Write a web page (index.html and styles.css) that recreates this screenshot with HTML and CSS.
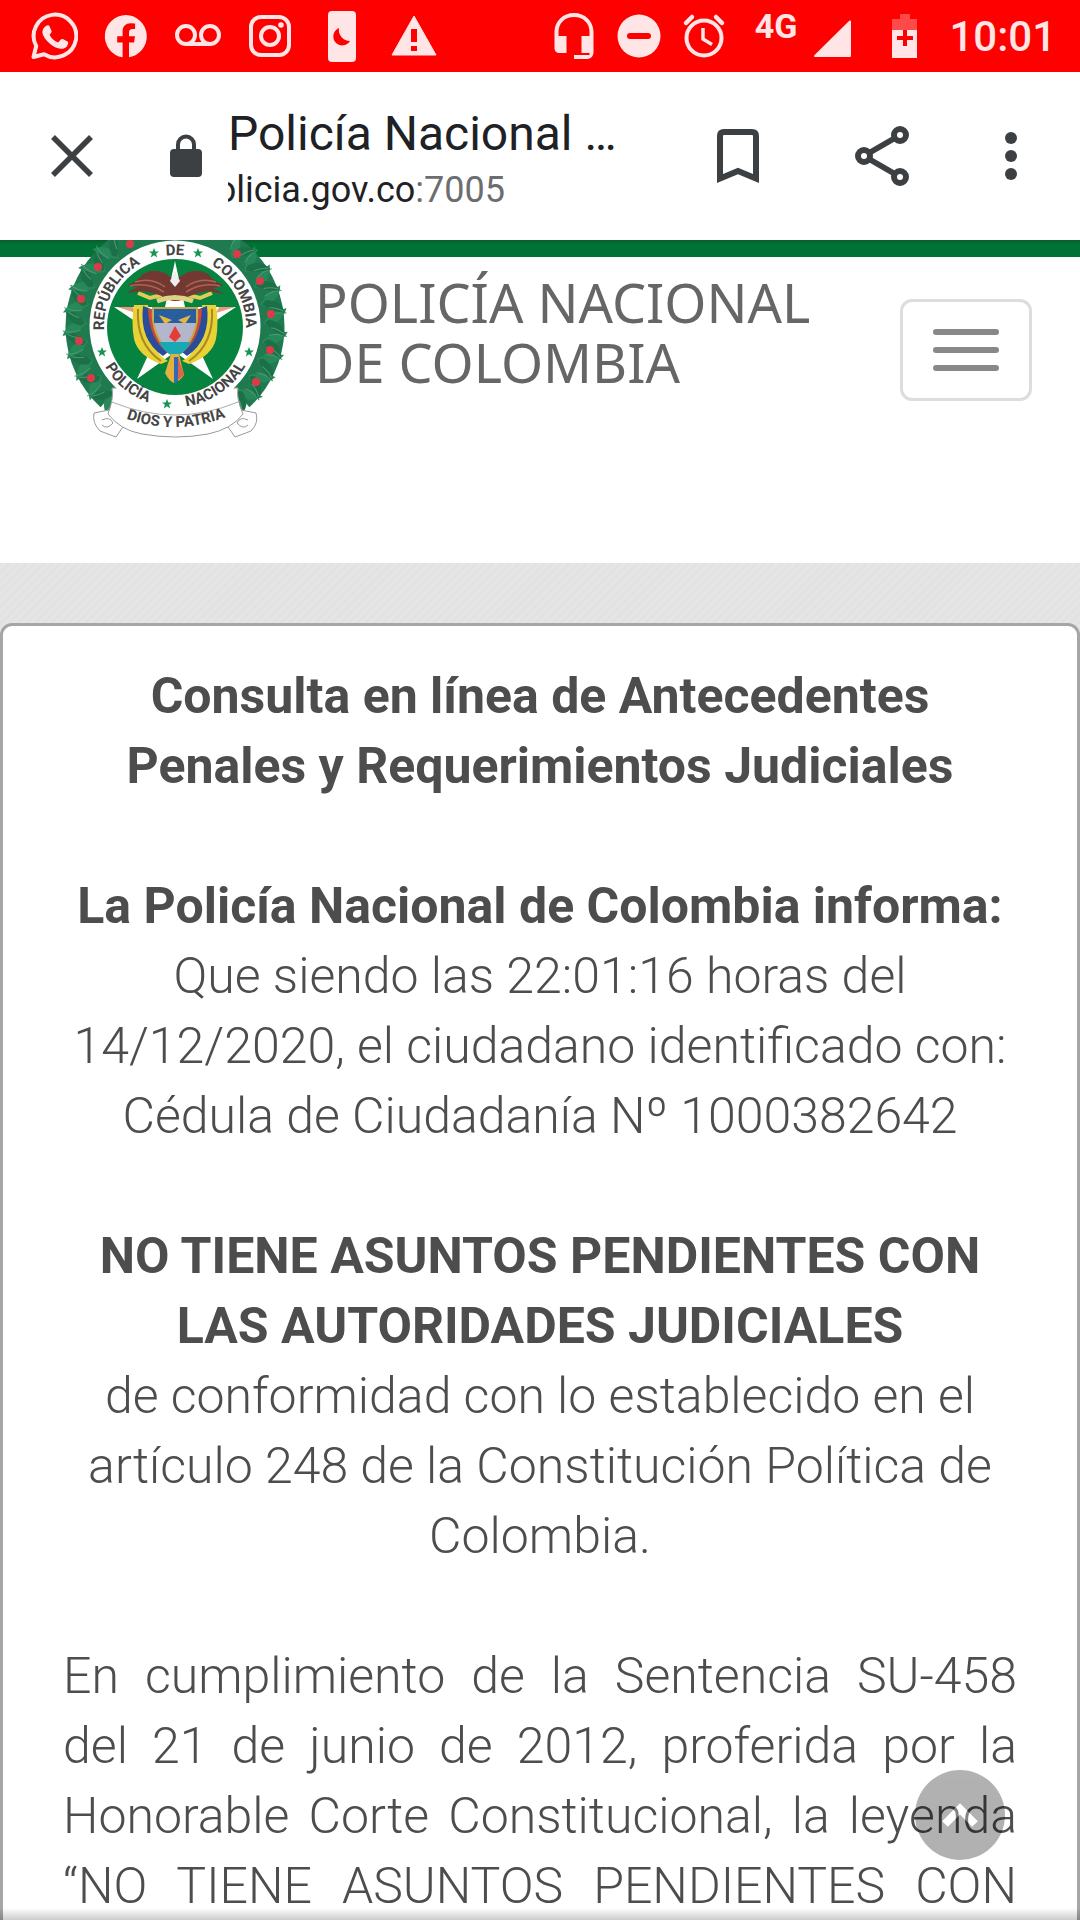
FILE: index.html
```html
<!DOCTYPE html>
<html lang="es">
<head>
<meta charset="utf-8">
<meta name="viewport" content="width=device-width, initial-scale=1">
<title>Policía Nacional de Colombia</title>
<link rel="stylesheet" href="styles.css">
</head>
<body>
<div class="screen">
  <div class="status">
    <div class="status-left">
      <svg class="status-icon" viewBox="0 0 48 48" aria-hidden="true"><path d="M3.500 45 L6.200 34 A21.300 21.300 0 1 1 14 42.200 Z" fill="none" stroke="currentColor" stroke-width="4" stroke-linejoin="round"/><path d="M16 14c1-1 3-1 3.600.4l2 4.600c.3.800 0 1.500-2 3.700 2 4 4.600 6.200 8.600 7.800l2.600-3c.6-.7 1.300-.7 2-.4l4.300 2.200c1 .5 1.200 1 1 2-.6 4-4 5.800-7.300 5.500C22 36 12.600 26 12.400 20c0-2.500 1.600-4.800 3.600-6z" fill="currentColor"/></svg>
      <svg class="status-icon" viewBox="0 0 48 48" aria-hidden="true"><path fill="currentColor" d="M24 3a21.300 21.300 0 0 0-3.400 42.300V30.500h-5.400v-6.200h5.400v-4.700c0-5.500 3.200-8.400 8-8.400 2.300 0 4.500.4 4.500.4V17h-2.600c-2.700 0-3.500 1.600-3.500 3.400v3.900H33l-1 6.200h-5v14.800A21.300 21.300 0 0 0 24 3z"/></svg>
      <svg class="status-icon" viewBox="0 0 48 48" aria-hidden="true"><g fill="none" stroke="currentColor" stroke-width="4"><circle cx="12" cy="23" r="9"/><circle cx="36" cy="23" r="9"/><path d="M12 32h24"/></g></svg>
      <svg class="status-icon" viewBox="0 0 48 48" aria-hidden="true"><g fill="none" stroke="currentColor" stroke-width="4"><rect x="5" y="5" width="38" height="38" rx="10"/><circle cx="24" cy="24" r="9"/></g><circle cx="35" cy="13" r="2.800" fill="currentColor"/></svg>
      <svg class="status-icon tall" viewBox="0 0 48 52" aria-hidden="true"><rect x="10" y="1" width="28" height="51" rx="4" fill="currentColor"/><path d="M21 18a9 9 0 1 0 11 13A11 11 0 0 1 21 18z" fill="#f00"/></svg>
      <svg class="status-icon" viewBox="0 0 48 48" aria-hidden="true"><path d="M24 4 46 43H2z" fill="currentColor" stroke="currentColor" stroke-width="1" stroke-linejoin="round"/><path d="M21 17h6v13h-6zM21 34h6v5h-6z" fill="#f00"/></svg>
    </div>
    <div class="status-right">
      <svg class="status-glyph" viewBox="0 0 48 48" aria-hidden="true"><path fill="currentColor" d="M24 1C13 1 4.500 9 4.500 20v16c0 3 2 5 5 5h7V24h-8v-4C8.500 11 15 5 24 5s15.500 6 15.500 15v4h-8v17h8v2H24v4h12.500c4 0 7-2.500 7-7V20C43.500 9 35 1 24 1z"/></svg>
      <svg class="status-glyph" viewBox="0 0 48 48" aria-hidden="true"><circle cx="24" cy="24" r="21.500" fill="currentColor"/><path d="M15 24h18" stroke="#f00" stroke-width="6" stroke-linecap="round"/></svg>
      <svg class="status-glyph" viewBox="0 0 48 48" aria-hidden="true"><g fill="none" stroke="currentColor" stroke-width="4"><circle cx="24" cy="26" r="17.500"/><path d="M23 16v11l9 5.500" stroke-width="3.500"/><path d="m6 11 6-6M42 11l-6-6" stroke-width="4.500" stroke-linecap="round"/></g></svg>
      <span class="network">4G</span>
      <svg class="status-glyph signal" viewBox="0 0 48 48" aria-hidden="true"><path d="M42 9.500V44H7z" fill="currentColor" stroke="currentColor" stroke-width="2" stroke-linejoin="round"/></svg>
      <svg class="status-glyph battery" viewBox="0 0 48 48" aria-hidden="true"><path d="M19 2h10v5h7v11H11V7h8z" fill="#ff4a4a"/><path d="M11 18h25v28H11z" fill="currentColor"/><path d="M24 18v16M16 26h16" stroke="#f00" stroke-width="4"/></svg>
      <span class="clock">10:01</span>
    </div>
  </div>

  <div class="toolbar">
    <button class="tool" aria-label="Cerrar"><svg width="48" height="48" viewBox="0 0 48 48"><path d="m5 5 38 38M43 5 5 43" stroke="currentColor" stroke-width="5.500"/></svg></button>
    <span class="lock"><svg width="32" height="44" viewBox="0 0 32 44" aria-hidden="true"><rect y="15" width="32" height="28" rx="4" fill="currentColor"/><path d="M8 16V10.500a8 8 0 0 1 16 0V16" fill="none" stroke="currentColor" stroke-width="4"/></svg></span>
    <div class="address">
      <div class="address-title">Policía Nacional …</div>
      <div class="address-url"><span>antecedentes.policia.gov.co<span class="port">:7005</span></span></div>
    </div>
    <button class="tool" aria-label="Guardar"><svg width="42" height="54" viewBox="0 0 42 54"><path d="M3 49.500V7q0-4 4-4h28q4 0 4 4v42.500L21 42z" fill="none" stroke="currentColor" stroke-width="6"/></svg></button>
    <button class="tool" aria-label="Compartir"><svg width="54" height="60" viewBox="0 0 54 60"><g fill="none" stroke="currentColor" stroke-width="6"><circle cx="9" cy="30" r="6"/><circle cx="45" cy="9" r="6"/><circle cx="45" cy="51" r="6"/><path d="m14 27 26-15M14 33l26 15" stroke-width="5.500"/></g></svg></button>
    <button class="tool menu" aria-label="Más opciones"><svg width="12" height="48" viewBox="0 0 12 48"><g fill="currentColor"><circle cx="6" cy="6" r="6"/><circle cx="6" cy="24" r="6"/><circle cx="6" cy="42" r="6"/></g></svg></button>
  </div>

  <div class="page">
    <header class="site-header">
      <svg class="crest" viewBox="62 240 226 198" role="img" aria-label="Escudo de la Policía Nacional">
        <defs>
          <g id="leaf"><path d="M175 238q-10-8-14-24 14 4 17 20z" fill="#27885a"/><path d="M175 236q10-8 14-20-14 1-17 16z" fill="#1b7048"/><path d="M168 232q-4-8-2-18M180 230q2-8 7-13" stroke="#4a9b70" stroke-width="1" fill="none"/></g>
          <path id="ring-top" d="M175 397A71 71 0 0 1 175 255A71 71 0 0 1 175 397"/>
          <path id="ring-bottom" d="M94 326A81 81 0 0 0 256 326"/>
          <path id="motto" d="M112 413Q175 442 240 411"/>
          <path id="star" d="M0-5 1.400-1.600 5-1.600 2.100.800 3.200 4.500 0 2.200-3.200 4.500-2.100.800-5-1.600-1.400-1.600z"/>
        </defs>
        <path d="M109 398A97 97 0 1 1 241 398" fill="none" stroke="#207a50" stroke-width="25"/>
        <g>
          <use href="#leaf" transform="rotate(-136 175 326)"/><use href="#leaf" transform="rotate(-124 175 326)"/><use href="#leaf" transform="rotate(-112 175 326)"/><use href="#leaf" transform="rotate(-100 175 326)"/><use href="#leaf" transform="rotate(-88 175 326)"/><use href="#leaf" transform="rotate(-76 175 326)"/><use href="#leaf" transform="rotate(-64 175 326)"/><use href="#leaf" transform="rotate(-52 175 326)"/><use href="#leaf" transform="rotate(-40 175 326)"/>
          <use href="#leaf" transform="rotate(136 175 326)"/><use href="#leaf" transform="rotate(124 175 326)"/><use href="#leaf" transform="rotate(112 175 326)"/><use href="#leaf" transform="rotate(100 175 326)"/><use href="#leaf" transform="rotate(88 175 326)"/><use href="#leaf" transform="rotate(76 175 326)"/><use href="#leaf" transform="rotate(64 175 326)"/><use href="#leaf" transform="rotate(52 175 326)"/><use href="#leaf" transform="rotate(40 175 326)"/>
        </g>
        <g fill="#dc3a48"><circle cx="130" cy="244" r="4"/><circle cx="98" cy="267" r="4"/><circle cx="81" cy="299" r="4"/><circle cx="79" cy="341" r="4"/><circle cx="91" cy="378" r="4"/><circle cx="237" cy="254" r="4"/><circle cx="260" cy="281" r="4"/><circle cx="271" cy="314" r="4"/><circle cx="270" cy="350" r="4"/><circle cx="256" cy="382" r="4"/></g>
        <g fill="#fff" stroke="#9a9a9a" stroke-width="1">
          <path d="M114 409 94 413Q92 423 100 431L116 437 127 421zM236 409 256 413Q259 423 251 431L235 437 224 421z"/>
          <path d="M112 388Q114 398 108 414 120 430 142 434 176 440 208 434 232 429 243 414 236 398 238 388z"/>
          <path d="M102 420q8-4 11 3-6 7-11 2M248 420q-8-4-11 3 6 7 11 2" fill="none"/>
        </g>
        <circle cx="175" cy="326" r="85.500" fill="#fff"/>
        <circle cx="175" cy="327" r="68" fill="#078340"/>
        <path d="M112 402Q175 428 238 402" fill="none" stroke="#aaa" stroke-width="1"/>
        <path d="m175 261 10 46h51l-43 29 20 43-38-27-38 27 20-43-43-29h51z" fill="#fff"/>
        <path d="m117 307 16 0 3 6zM235 307l-16 0-3 6z" fill="#e89a7c"/>
        <path d="M138 293l12 5 12-3M212 293l-12 5-12-3" stroke="#e2cc55" stroke-width="4" fill="none"/>
        <path d="M172 301q-15-8-29-10l-17 2q6-3 12-6-7 0-10-2 8-3 15-11 11-6 22-1l7 5q3-4 6 0l8-5q12-5 22 1 7 8 15 11-4 3-10 3l12 6-18-3q-15 3-28 10z" fill="#743832"/>
        <path d="M130 286q18-4 34 6M135 282q17-5 30 5M220 286q-18-4-34 6M216 282q-17-5-30 5" stroke="#a96557" stroke-width="1.500" fill="none"/>
        <path d="m175 271-5 10 5 6 5-6z" fill="#eee"/>
        <path d="M134 305q-3 17 0 34 4 17 27 25l7-3q-20-9-20-56zM216 305q3 17 0 34-4 17-27 25l-7-3q20-9 20-56z" fill="#e8d235"/>
        <path d="M138 309q-2 35 23 52M212 309q2 35-23 52" fill="none" stroke="#aa8922" stroke-width="2"/>
        <path d="M143 306q-4 34 20 50l5-4q-19-13-17-43zM207 306q4 34-20 50l-5-4q19-13 17-43z" fill="#294d98"/>
        <path d="M150 309q1 30 20 43M200 309q-1 30-20 43" fill="none" stroke="#ca4937" stroke-width="4"/>
        <path d="M153 308h44q3 29-22 50-25-21-22-50z" fill="#b4b7cc" stroke="#c8a94c" stroke-width="2"/>
        <path d="M154 309h42v14h-42z" fill="#285e9e"/>
        <path d="m159 315 13 5-7 4zM191 315l-13 5 7 4z" fill="#e2b745"/>
        <path d="m175 326 6 10-6 6-6-5z" fill="#e43c37"/>
        <path d="M159 342h32q-5 10-16 15-11-5-16-15z" fill="#19a9b4"/>
        <path d="M157 301q18-7 36 0" fill="none" stroke="#ddd184" stroke-width="5"/>
        <path d="M171 354h8l5 21q-4 6-10 8-5-2-9-10z" fill="#e2b23d"/><path d="m174 357 4 0 0 25-4 1z" fill="#3269b7"/><path d="m178 356 6 19-6 5z" fill="#dd6548"/>
        <g fill="#169451"><use href="#star" x="154" y="253"/><use href="#star" x="198" y="253"/><use href="#star" x="102" y="352"/><use href="#star" x="249" y="352"/><use href="#star" x="167" y="404"/></g>
        <g class="ring-text">
          <text><textPath href="#ring-top" startOffset="33%">REPÚBLICA</textPath></text>
          <text><textPath href="#ring-top" startOffset="50%">DE</textPath></text>
          <text><textPath href="#ring-top" startOffset="67%">COLOMBIA</textPath></text>
          <text><textPath href="#ring-bottom" startOffset="28%">POLICÍA</textPath></text>
          <text><textPath href="#ring-bottom" startOffset="69%">NACIONAL</textPath></text>
          <text><textPath href="#motto" startOffset="50%">DIOS Y PATRIA</textPath></text>
        </g>
      </svg>
      <div class="brand">POLICÍA NACIONAL<br>DE COLOMBIA</div>
      <button class="nav-toggle" aria-label="Menú"><span></span><span></span><span></span></button>
    </header>

    <main class="panel">
      <h1>Consulta en línea de Antecedentes<br>Penales y Requerimientos Judiciales</h1>
      <section>
        <h2>La Policía Nacional de Colombia informa:</h2>
        <p>Que siendo las 22:01:16 horas del<br>14/12/2020, el ciudadano identificado con:<br>Cédula de Ciudadanía Nº 1000382642</p>
      </section>
      <section>
        <h2>NO TIENE ASUNTOS PENDIENTES CON LAS AUTORIDADES JUDICIALES</h2>
        <p>de conformidad con lo establecido en el artículo 248 de la Constitución Política de Colombia.</p>
      </section>
      <p class="legal">En cumplimiento de la Sentencia SU-458 del 21 de junio de 2012, proferida por la Honorable Corte Constitucional, la leyenda “NO TIENE ASUNTOS PENDIENTES CON</p>
    </main>
  </div>
  <button class="to-top" aria-label="Volver arriba"><svg width="40" height="28" viewBox="0 0 40 28"><path d="m5 23 15-15 15 15" fill="none" stroke="#fff" stroke-width="8"/></svg></button>
</div>
</body>
</html>
```
FILE: styles.css
```css
* {
  box-sizing: border-box;
}

body {
  margin: 0;
  font-family: Roboto, "Liberation Sans", sans-serif;
  background: #fff;
}

button {
  padding: 0;
  border: 0;
  background: none;
  color: inherit;
}

svg {
  display: block;
}

h1, h2, p {
  margin: 0;
}

.screen {
  display: flex;
  flex-direction: column;
  height: 100vh;
  overflow: hidden;
  position: relative;
}

/* the page runs on under the lower edge of the screen */
.screen::after {
  content: "";
  position: absolute;
  left: 0;
  right: 0;
  bottom: 0;
  height: 12px;
  background: linear-gradient(rgba(0, 0, 0, 0), rgba(0, 0, 0, 0.2));
}

/* Status bar */
.status {
  flex: none;
  display: flex;
  justify-content: space-between;
  height: 72px;
  padding: 0 24px 0 30px;
  background: #f00;
  color: #ffe5e5;
}

.status-left,
.status-right {
  display: flex;
  align-items: center;
}

.status-left {
  gap: 24px;
}

.status-icon,
.status-glyph {
  width: 48px;
  height: 48px;
}

.tall {
  height: 52px;
}

.status-right {
  gap: 17px;
}

.network {
  align-self: flex-start;
  padding: 6px 0 0 10px;
  font-size: 34px;
  line-height: 40px;
  font-weight: 700;
}

.signal {
  margin-left: -6px;
}

.battery {
  margin: 0 3px 0 8px;
}

.clock {
  font-size: 42px;
  font-weight: 500;
}

/* Browser toolbar */
.toolbar {
  flex: none;
  display: flex;
  height: 168px;
  padding-right: 12px;
  color: #3c4043;
}

.tool,
.lock {
  display: grid;
  place-items: center;
  flex: none;
}

.tool {
  width: 144px;
}

.menu {
  width: 114px;
}

.lock {
  width: 84px;
}

.address {
  flex: 1;
  min-width: 0;
  padding-top: 32px;
  color: #202124;
}

.address-title {
  font-size: 48px;
  line-height: 60px;
  white-space: nowrap;
}

.address-url {
  display: flex;
  justify-content: flex-end;
  width: 277px;
  overflow: hidden;
  font-size: 36px;
  line-height: 52px;
  white-space: nowrap;
}

.port {
  color: #6b6d70;
}

/* Site */
.page {
  flex: 1;
  display: flex;
  flex-direction: column;
  min-height: 0;
  background: repeating-linear-gradient(135deg, #e2e2e2 0 3px, #e5e5e5 3px 6px);
}

.site-header {
  flex: none;
  display: flex;
  align-items: flex-start;
  padding: 0 48px 125px 62px;
  background: linear-gradient(#0d5a30 0, #007236 4px, #007236 17px, #fff 17px);
}

.crest {
  width: 226px;
  height: 198px;
}

.ring-text {
  font-size: 15px;
  font-weight: 700;
  fill: #444;
  text-anchor: middle;
}

.brand {
  padding: 32px 0 0 27px;
  font-family: "Noto Sans", sans-serif;
  font-size: 54px;
  line-height: 60px;
  color: #666;
  white-space: nowrap;
}

.nav-toggle {
  display: flex;
  flex-direction: column;
  gap: 12px;
  margin: 59px 0 0 auto;
  padding: 27px 30px;
  border: 3px solid #ddd;
  border-radius: 12px;
}

.nav-toggle span {
  width: 66px;
  height: 6px;
  border-radius: 3px;
  background: #888;
}

.panel {
  flex: none;
  display: flex;
  flex-direction: column;
  gap: 70px;
  margin-top: 60px;
  padding: 35px 60px;
  border: 3px solid #a6a6a6;
  border-radius: 12px;
  background: #fff;
  color: #4d4d4d;
  font-size: 50px;
  line-height: 70px;
  font-weight: 300;
  text-align: center;
}

.panel h1,
.panel h2 {
  font-size: inherit;
  font-weight: 700;
}

.legal {
  text-align: justify;
  text-align-last: justify;
}

.to-top {
  position: absolute;
  right: 75px;
  bottom: 60px;
  display: grid;
  place-items: center;
  width: 90px;
  height: 90px;
  border-radius: 50%;
  background: #000;
  opacity: 0.3;
}
```
